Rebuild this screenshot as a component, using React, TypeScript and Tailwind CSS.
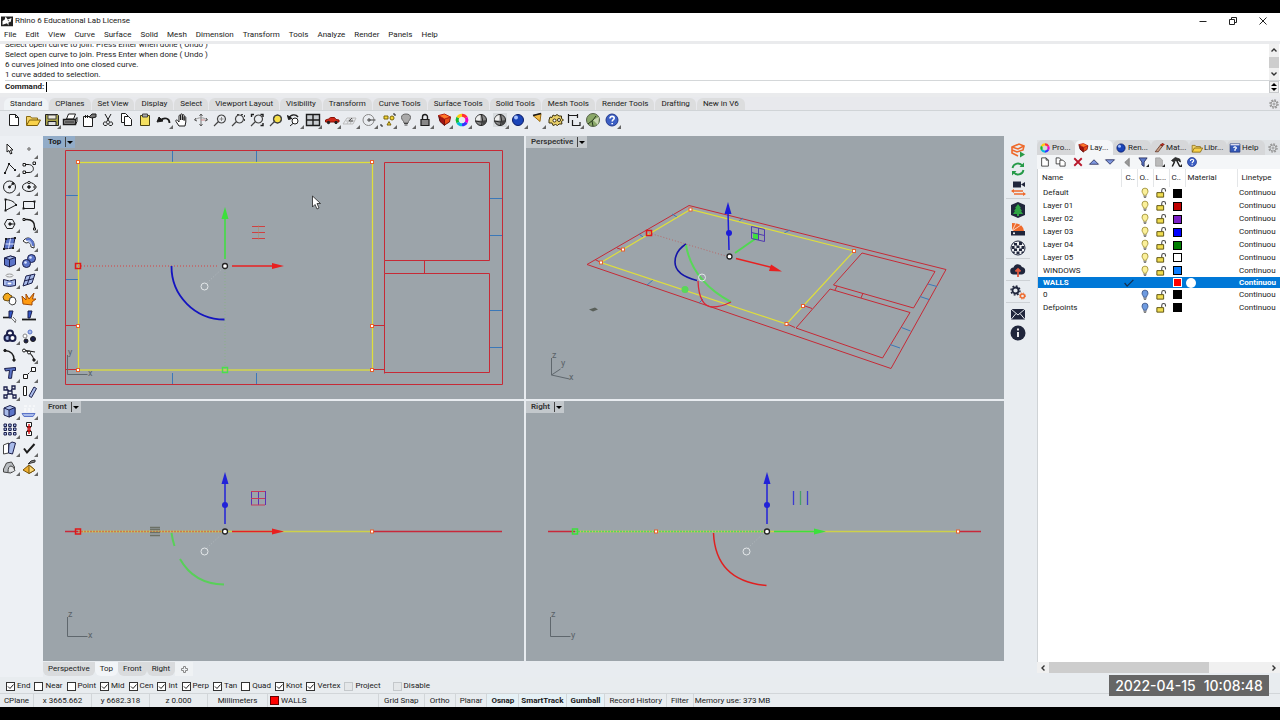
import { useState } from "react";
import type { ReactNode } from "react";
import clsx from "clsx";

interface Tool {
  name: string;
  more?: boolean;
  art: ReactNode;
}

interface Layer {
  name: string;
  on: boolean;
  color: string;
}

const MENUS = [
  "File", "Edit", "View", "Curve", "Surface", "Solid", "Mesh", "Dimension",
  "Transform", "Tools", "Analyze", "Render", "Panels", "Help",
];

const TOOLBAR_TABS = [
  "Standard", "CPlanes", "Set View", "Display", "Select", "Viewport Layout",
  "Visibility", "Transform", "Curve Tools", "Surface Tools", "Solid Tools",
  "Mesh Tools", "Render Tools", "Drafting", "New in V6",
];

const HISTORY = [
  "Select open curve to join. Press Enter when done ( Undo )",
  "Select open curve to join. Press Enter when done ( Undo )",
  "6 curves joined into one closed curve.",
  "1 curve added to selection.",
];

const OSNAPS = [
  { name: "End", on: true },
  { name: "Near", on: false },
  { name: "Point", on: false },
  { name: "Mid", on: true },
  { name: "Cen", on: true },
  { name: "Int", on: true },
  { name: "Perp", on: true },
  { name: "Tan", on: true },
  { name: "Quad", on: false },
  { name: "Knot", on: true },
  { name: "Vertex", on: true },
];

const LAYERS: Layer[] = [
  { name: "Default", on: true, color: "#000000" },
  { name: "Layer 01", on: true, color: "#c00000" },
  { name: "Layer 02", on: true, color: "#7a1fc8" },
  { name: "Layer 03", on: true, color: "#0000ff" },
  { name: "Layer 04", on: true, color: "#007f00" },
  { name: "Layer 05", on: true, color: "#ffffff" },
  { name: "WINDOWS", on: true, color: "#0a7cff" },
  { name: "WALLS", on: true, color: "#ff0000" },
  { name: "0", on: false, color: "#000000" },
  { name: "Defpoints", on: false, color: "#000000" },
];

const K = "#1c1c1c";
const NAVY = "#1b1f4b";
const BLUE = "#5b74c8";
const SKY = "#a9bbea";

function Icon({ children, className = "size-4" }: { children: ReactNode; className?: string }) {
  return (
    <svg
      viewBox="0 0 16 16"
      className={clsx("shrink-0", className)}
      fill="none"
      stroke={K}
      strokeWidth="1"
      aria-hidden="true"
    >
      {children}
    </svg>
  );
}

function ToolButton({ tool }: { tool: Tool }) {
  return (
    <button type="button" aria-label={tool.name} className="relative flex items-center justify-center">
      <Icon>{tool.art}</Icon>
      {tool.more && (
        <svg viewBox="0 0 4 4" className="absolute right-0 bottom-0 size-1" aria-hidden="true">
          <path d="M4 0V4H0Z" fill="#666" />
        </svg>
      )}
    </button>
  );
}

// Shared drawings

const pageArt = <path d="M3.5 2.5h6l3 3v8h-9z M9.5 2.5v3h3" fill="#fff" />;

const folderArt = (
  <>
    <path d="M1.5 13V4.5h4l1 1.5h6v2" fill="#f3d46a" stroke="#8a6a10" />
    <path d="M1.5 13.5l3-5.5h11l-3 5.5z" fill="#f9d24a" stroke="#7a5c08" />
  </>
);

const layersArt = (
  <>
    <path d="M2.500 3.500l6 3.500v6.500L4 9.500z" fill="#a01414" stroke="#5a0c0c" />
    <path d="M8.500 7l6-2-1 5-5 3z" fill="#e84a18" stroke="#7a1008" />
    <path d="M2.500 3.500l6-1.500 6 3-6 2z" fill="#ff7a2a" stroke="#c02010" />
  </>
);

const wheelArt = (
  <g fill="none" strokeWidth="3">
    <path d="M8 3.200a4.800 4.800 0 0 1 4.200 2.400" stroke="#f33" />
    <path d="M12.200 5.600a4.800 4.800 0 0 1 0 4.800" stroke="#e0c" />
    <path d="M12.200 10.400A4.800 4.800 0 0 1 8 12.800" stroke="#33f" />
    <path d="M8 12.800a4.800 4.800 0 0 1-4.200-2.400" stroke="#0bd" />
    <path d="M3.800 10.400a4.800 4.800 0 0 1 0-4.800" stroke="#1b3" />
    <path d="M3.800 5.600A4.800 4.800 0 0 1 8 3.200" stroke="#fc1" />
  </g>
);

const helpArt = (
  <>
    <circle cx="8" cy="8" r="6" fill="#3c5fc4" stroke="#23388c" />
    <path d="M6 6.500c0-3 4.200-2.600 4.200-.3 0 1.500-2 1.500-2 3.300M8.200 11v1.300" stroke="#fff" strokeWidth="1.600" />
  </>
);

const sphereArt = (
  <>
    <circle cx="8" cy="8" r="5.500" fill="#888" stroke="#222" />
    <path d="M7.500 3a5.500 5.500 0 0 0-5 5.500h5z" fill="#eee" stroke="none" />
    <path d="M2.500 9q5.500 2 11 0M8.500 2.500q2 5.500 0 11" stroke="#222" />
    <path d="M9.500 8.500h4a5 5 0 0 1-4 5z" fill="#444" stroke="none" />
  </>
);

const blueSphereArt = (
  <>
    <circle cx="8" cy="8" r="5.500" fill="#1a44b8" stroke="#0a1b66" />
    <circle cx="6" cy="5.500" r="2" fill="#a8c2ff" stroke="none" />
  </>
);

const lensArt = <path d="M9.500 3a4 4 0 1 1-.1 0zM6.500 9.500L2 14" stroke="#444" strokeWidth="1.200" />;

const STANDARD_TOOLS: Tool[] = [
  { name: "New", art: pageArt },
  { name: "Open", art: folderArt },
  {
    name: "Save",
    more: true,
    art: (
      <>
        <path d="M1.500 2.500h12l1 1v10h-13z" fill="#a8a24a" stroke="#222" />
        <path d="M4 3h8v4H4z" fill="#eceade" stroke="#444" />
        <path d="M4 9.500h8v4H4z" fill="#ddd" stroke="#222" />
      </>
    ),
  },
  {
    name: "Print",
    art: (
      <>
        <path d="M4.500 7l2-5h7l-2 5z" fill="#fff" />
        <path d="M1.500 7.500h12v5h-12z" fill="#999" strokeWidth="1.400" />
        <path d="M13.500 7.500l1.500-2v4l-1.500 3M3 10h9" />
      </>
    ),
  },
  {
    name: "Properties",
    art: (
      <>
        <path d="M2.500 4.500h9v10h-9z" fill="#fff" />
        <path d="M8 5l3-3h4v3l-4 1z" fill="#777" />
        <path d="M4.500 3v3M6.500 3v3" />
      </>
    ),
  },
  { name: "Cut", art: <path d="M5 2l4.500 8M11 2L6.500 10M6 10.500a1.500 1.800 0 1 0-1 3 1.800 1.500 0 0 0 1-3zM10 10.500a1.500 1.800 0 1 1 1 3 1.800 1.500 0 0 1-1-3z" /> },
  {
    name: "Copy",
    art: (
      <>
        <path d="M3.500 1.500h4l3 3v6h-7z" fill="#fff" />
        <path d="M6.500 4.500h4l3 3v6h-7z" fill="#fff" />
      </>
    ),
  },
  {
    name: "Paste",
    art: (
      <>
        <path d="M3.500 3.500h9v10h-9z" fill="#f4e060" stroke="#4a4210" />
        <path d="M5.500 2h5v3h-5z" fill="#a8a8a8" stroke="#444" />
      </>
    ),
  },
  {
    name: "Undo",
    more: true,
    art: (
      <>
        <path d="M13.500 11c0-5-5-6-9-3" strokeWidth="1.800" />
        <path d="M1 10l2-5 4 4z" fill={K} />
      </>
    ),
  },
  { name: "Pan", art: <path d="M5 14L2 9.500c-1-1.500 1-2 1.800-.8L5 10V4c0-1.200 1.600-1.200 1.600 0v4-5.200c0-1.200 1.800-1.200 1.800 0V8 3.500c0-1.200 1.700-1.200 1.700 0V8.500 5.500c0-1.200 1.700-1.200 1.700 0v4.500L11 14z" fill="#fff" /> },
  {
    name: "Rotate view",
    art: (
      <>
        <path d="M8 2v12" stroke="#777" />
        <path d="M2 8c3-3 9-3 12 0" stroke="#999" />
        <path d="M6.500 4L8 2l1.500 2M6.500 12L8 14l1.500-2M3 6L1.500 8 4 9M13 6l1.500 2L12 9" stroke="#555" />
        <path d="M8 8h4" stroke="#c88" />
      </>
    ),
  },
  { name: "Zoom dynamic", art: <>{lensArt}<path d="M7.500 7h4M9.500 5v4" stroke="#888" /></> },
  { name: "Zoom window", art: <>{lensArt}<path d="M7 2.500h7.500v8" stroke="#444" strokeDasharray="2 2" /></> },
  { name: "Zoom extents", art: <>{lensArt}<path d="M2.500 5V2.500H5M11.500 2.500H14V5M14 11v2.500h-2.500" strokeWidth="1.400" /></> },
  { name: "Zoom selected", art: <><circle cx="9.500" cy="7" r="4" fill="#f6df48" />{lensArt}</> },
  { name: "Undo view change", more: true, art: <><path d="M3 6c2-4 7-4 9-1" strokeWidth="1.400" /><path d="M1.500 3.500l1 4 3.500-1z" fill={K} /><circle cx="9" cy="9" r="3" fill="#fff" /><path d="M7 11.500L4 14" /></> },
  { name: "Four viewports", more: true, art: <><path d="M1.500 2.500h13v11h-13z" fill="#c8ccd0" strokeWidth="1.400" /><path d="M8 2.500v11M1.500 8h13" strokeWidth="1.400" /></> },
  { name: "Set view", more: true, art: <><path d="M1.500 10V8l3-1 2-1.500h4l1.500 2 3 .5v2z" fill="#d02818" stroke="#8a1208" /><circle cx="4.500" cy="10.500" r="1.200" fill="#222" /><circle cx="12" cy="10.500" r="1.200" fill="#222" /></> },
  { name: "Set CPlane", more: true, art: <><path d="M1 12l4-6h9l-3 6zM4 9h9M8 6l-3 6M11 6l-3 6" stroke="#bbb" /><path d="M7 9l3-3M7 9h4" stroke="#555" /></> },
  { name: "Object snap", more: true, art: <><circle cx="7.500" cy="8" r="5.500" stroke="#888" /><path d="M7.500 8h7" stroke="#444" /><circle cx="8" cy="8" r="1.200" stroke="#444" /></> },
  { name: "Select", more: true, art: <><path d="M4 4h4v3H4z" fill="#f6d838" stroke="#7a6408" /><path d="M7 13l2-3.500 2 3.500z" fill="#f6d838" stroke="#7a6408" /><circle cx="12" cy="6" r="2" fill="#f6d838" stroke="#7a6408" /><path d="M1 12v2h2M13 2h2v2" /></> },
  { name: "Hide", more: true, art: <><path d="M6 11C6 9 3.500 8 3.500 5.500a4.500 3.500 0 0 1 9 0C12.500 8 10 9 10 11z" fill="#aaa" stroke="#666" /><path d="M6 11.500h4M6.500 13h3" stroke="#444" /></> },
  { name: "Lock", more: true, art: <><path d="M5.500 7.500V5a2.500 2.500 0 0 1 5 0v2.500" strokeWidth="1.400" /><path d="M4 7.500h8v6H4z" fill="#888" strokeWidth="1.200" /></> },
  { name: "Edit layers", more: true, art: layersArt },
  { name: "Object properties", more: true, art: wheelArt },
  { name: "Shade", art: sphereArt },
  { name: "Rendered", more: true, art: <><path d="M1 1h14v14H1z" fill="#d6dadd" stroke="none" />{sphereArt}</> },
  { name: "Render", more: true, art: blueSphereArt },
  { name: "Spotlight", more: true, art: <><path d="M4 3.500l8-2-1 8z" fill="#f2bc48" stroke="#9a6a10" /><path d="M4 3.500l8-2" strokeWidth="1.500" /></> },
  { name: "Options", art: <><path d="M1 8l1-3 2 .5L5 3l2 1 2-1.500L11 4l2.500 0L13.500 6.500 15.500 8l-2 1.500.5 2.500-3 0-1.500 1.500-2-1-2.500 1L4 11l-3 0z" fill="#e8cf6a" stroke="#3a3010" /><path d="M5 8.500a1.500 1.500 0 1 0 3 0 1.500 1.500 0 1 0-3 0M9.500 8a1.500 1.500 0 1 0 3 0 1.500 1.500 0 1 0-3 0" fill="#fff" stroke="#3a3010" /></> },
  { name: "Dimension", more: true, art: <path d="M2.500 2v9M2.500 3.500h9M11.500 2v4M6.500 8v5.500h7M14 10v4" strokeWidth="1.200" /> },
  { name: "Grasshopper", art: <><circle cx="8" cy="8" r="6.500" fill="#8aa868" stroke="#55624a" /><path d="M8 8l6-3-1 8z" fill="#c8d6b0" stroke="none" /><path d="M3 12l5-4 3-4M7 9l1 5" stroke="#26381c" /></> },
  { name: "Help", more: true, art: helpArt },
];

const SIDE_TOOLS: Tool[] = [
  { name: "Pointer", art: <path d="M5 3v8l2-1.500 1.500 3.500 1.500-.7L8.500 9H11z" fill="#fff" /> },
  { name: "Point", more: true, art: <circle cx="8" cy="8" r="1.200" fill="#fff" stroke="#555" /> },
  { name: "Polyline", more: true, art: <><path d="M3 13L7 4l6 6" /><path d="M2 12h2v2H2zM6 3h2v2H6zM12 9h2v2h-2z" fill={K} stroke="none" /></> },
  { name: "Curve", more: true, art: <><path d="M3 12.500h5c6 0 6-8-1-8H3" /><path d="M2 3.500h2.500V6H2zM12 2h2.500v2.500H12zM2 11h2.500v2.500H2z" fill="#fff" /></> },
  { name: "Circle", more: true, art: <><circle cx="7.500" cy="8" r="6" /><path d="M7.500 8l3-3" /><circle cx="7.500" cy="8" r="1" fill={K} /><circle cx="11" cy="4.500" r="1" fill={K} /></> },
  { name: "Ellipse", more: true, art: <><ellipse cx="8" cy="8" rx="6.500" ry="4.500" /><circle cx="8" cy="8" r="1.300" fill={K} /><circle cx="8" cy="3.500" r="1.200" fill="#fff" /><circle cx="14" cy="8" r="1.200" fill="#fff" /></> },
  { name: "Arc", more: true, art: <><path d="M3.500 2.500v11L14 8C12 4 8 3 3.500 2.500z" /><path d="M2.500 1.500h2v2h-2zM2.500 12.500h2v2h-2zM13 7h2v2h-2z" fill={K} stroke="none" /></> },
  { name: "Rectangle", more: true, art: <><path d="M2.500 4.500h11v7h-11z" /><path d="M1.500 10.500h2v2h-2zM12.500 3.500h2v2h-2z" fill={K} stroke="none" /></> },
  { name: "Polygon", more: true, art: <><path d="M5 3.500h5.500L13 8l-2.500 4.500H5L2.500 8z" /><path d="M8 8h5" /><circle cx="8" cy="8" r="1.200" fill={K} /></> },
  { name: "Fillet", more: true, art: <><path d="M3 3.500h3c5 0 7.500 3 7.500 7v3" strokeWidth="1.400" /><path d="M2 2.500h2v2H2zM12.500 12h2v2h-2z" fill="#fff" /></> },
  { name: "Surface", more: true, art: <><path d="M4 4l9-1-2 10-9 1z" fill={BLUE} stroke={NAVY} /><path d="M3.500 9h9M8.500 3.500l-2 10" stroke="#dde4ff" /><path d="M3 3h2v2H3zM12 2h2v2h-2zM10 12h2v2h-2zM1 13h2v2H1z" fill={K} stroke="none" /></> },
  { name: "Sweep", more: true, art: <><path d="M2 6q4-5 8-2 4 3 3 9l-3-1q0-6-5-4z" fill="#fff" stroke="#333" /><path d="M5 5q3-2 5 0 3 3 2 6" fill={SKY} stroke={BLUE} strokeWidth="2" /></> },
  { name: "Box", more: true, art: <><path d="M2.500 5l6-2 5 1.500v7l-6 2.500-5-2z" fill={BLUE} stroke={NAVY} /><path d="M2.500 5l5 1.500 6-2-5-1.500z" fill={SKY} stroke={NAVY} /><path d="M7.500 6.500V14" stroke={NAVY} /></> },
  { name: "Boolean", more: true, art: <><circle cx="10.500" cy="5.500" r="4" fill={BLUE} stroke={NAVY} /><circle cx="5.500" cy="10.500" r="4" fill={BLUE} stroke={NAVY} /><circle cx="9.500" cy="4.500" r="1.300" fill="#dde5ff" stroke="none" /><circle cx="4.500" cy="9.500" r="1.300" fill="#dde5ff" stroke="none" /></> },
  { name: "Extract surface", more: true, art: <><ellipse cx="7.500" cy="3.500" rx="3.500" ry="1.500" stroke="#999" /><path d="M1.500 7.500q6 3 12 0v6q-6 2-12 0z" fill={SKY} stroke={NAVY} /><path d="M5 10h5v3H5z" fill="#fff" stroke={BLUE} /></> },
  { name: "Mesh", more: true, art: <><path d="M5 4l9-2-3 9-9 3z" fill={SKY} stroke={NAVY} /><path d="M3 9l10-2.500M9.500 3L6 13" stroke={NAVY} /></> },
  { name: "Join", art: <><path d="M3 3l3-1 2 2 2 1-1 3-3 2-4-1-1-3z" fill="#f3a81c" stroke="#6a4808" /><path d="M8 7l3-1 2 1 1 3-1 3-3 1-3-2z" fill="#fff" stroke="#444" /></> },
  { name: "Explode", art: <path d="M2 13L1 5l4 4V3l3 5 5-6-1.500 6L15 8l-4 3v3z" fill="#ff9a10" stroke="#a04a08" /> },
  { name: "Trim", art: <><path d="M1 8.500h6" strokeWidth="1.600" /><path d="M7 2h4l-2 7H7z" fill="#3458c8" stroke={NAVY} /><path d="M9 9l4 4M11 8l3 3-1 3" stroke="#777" /></> },
  { name: "Split", art: <><path d="M1 10.500h14" strokeWidth="1.800" /><path d="M7 2h4L9 9H7z" fill="#3458c8" stroke={NAVY} /></> },
  { name: "Group", more: true, art: <><circle cx="8" cy="5.500" r="3" stroke={NAVY} strokeWidth="2" fill="#fff" /><circle cx="5.500" cy="10" r="3" stroke={NAVY} strokeWidth="2" fill={SKY} /><circle cx="10.500" cy="10" r="3" stroke={NAVY} strokeWidth="2" fill="#fff" /></> },
  { name: "Ungroup", art: <><circle cx="9" cy="4" r="2" fill={SKY} stroke={BLUE} /><circle cx="4" cy="8" r="2" fill="#fff" stroke="#888" /><circle cx="12" cy="11" r="2.500" fill={NAVY} /><circle cx="5" cy="13" r="2" fill={NAVY} /></> },
  { name: "Points on", art: <><path d="M3 3.500q9 1 9 9" strokeWidth="1.300" /><circle cx="3" cy="3.500" r="1.200" fill={K} /><circle cx="12" cy="13" r="1.200" fill={K} /></> },
  { name: "Edit points", more: true, art: <><path d="M2 3l12 2M2 3q9 2 11 10" strokeWidth="1.200" /><circle cx="3" cy="3.500" r="1.500" fill="#fff" /><circle cx="8" cy="5.500" r="1.500" fill="#fff" /><circle cx="13" cy="13" r="1.200" fill={K} /></> },
  { name: "Text", more: true, art: <path d="M2.500 3.500l11-1v3l-3-.2-1 8h-3l1-8-4 .7z" fill={BLUE} stroke={NAVY} /> },
  { name: "Move", more: true, art: <><path d="M2.500 9.500h4v4h-4zM10.500 2.500h4v4h-4z" fill="#fff" /><path d="M7 9l3-3" strokeDasharray="1.500 1" /></> },
  { name: "Block", more: true, art: <path d="M2 3h3v3H2zM10 2h3v3h-3zM6 7h4v3H6zM2 11h3v3H2zM11 11h3v3h-3zM5 5l2 2M10 5L9 7M5 11l1-1M10 10l1 1" stroke={NAVY} strokeWidth="1.300" /> },
  { name: "Align", art: <><path d="M2.500 2.500h3v9h-3z" fill="#fff" /><path d="M8 12l5-9 2.500 1.500-5 9z" fill={SKY} stroke={NAVY} /></> },
  { name: "Cage", more: true, art: <><path d="M2 5l6-2.500 5 2v7l-6 2.500-5-2z" fill={SKY} stroke={NAVY} /><path d="M7 7l6-2.500v7L7 14z" fill={BLUE} stroke={NAVY} /><path d="M2 5l5 2" stroke={NAVY} /></> },
  { name: "Project", more: true, art: <><path d="M3 3h3M8 3h2M12 3h2M4 5v4M8 5v4M12 5v4" stroke="#fff" /><path d="M1 10.500h13l-2 3H3z" fill={SKY} stroke={BLUE} /></> },
  { name: "Array", more: true, art: <path d="M2 3h2.500v2.500H2zM6.700 3h2.500v2.500H6.700zM11.500 3H14v2.500h-2.500zM2 7h2.500v2.500H2zM6.700 7h2.500v2.500H6.700zM11.500 7H14v2.500h-2.500zM2 11.500h2.500V14H2zM6.700 11.500h2.500V14H6.700zM11.500 11.500H14V14h-2.500z" fill={SKY} stroke={NAVY} /> },
  { name: "Distribute", more: true, art: <><path d="M5.500 1.500h5v4h-5zM5.500 10.500h5v4h-5z" fill="#fff" /><path d="M8 3v10" stroke="#d22" strokeWidth="1.500" /><path d="M6 7l2-2 2 2zM6 9l2 2 2-2z" fill="#d22" stroke="#a11" /></> },
  { name: "Flow", more: true, art: <><path d="M1.500 5l5-2v10l-5 1z" fill="#fff" stroke="#444" /><path d="M7 4l3-2 3.500 1-3 11-4-1z" fill={SKY} stroke={NAVY} /></> },
  { name: "Check", more: true, art: <path d="M3 8.500L6 12.500 13.500 4" strokeWidth="2" /> },
  { name: "Solids", more: true, art: <><path d="M1.500 10l3-6 5-1 3 5v4l-4 2-7-1z" fill="#b8bcc0" stroke="#444" /><path d="M6 13q0-6 3-6t4 5" fill="#e4e6e8" stroke="#444" /></> },
  { name: "Pyramid", more: true, art: <><path d="M2 11l6-5 6 5-6 3.500z" fill="#f0b030" stroke="#7a5408" /><path d="M8 6v8.500l6-3.500z" fill="#f9d878" stroke="#7a5408" /><path d="M7 5l3-3 4-1v2l-4 1z" fill="#888" stroke="#333" /></> },
];

const PANEL_TABS: Tool[] = [
  { name: "Pro...", art: wheelArt },
  { name: "Lay...", art: layersArt },
  { name: "Ren...", art: blueSphereArt },
  { name: "Mat...", art: <><path d="M3 13l7-9 3 1-6 8z" fill="#c8a088" stroke="#5a2a18" /><path d="M10 4l2-2 3 1-2 2z" fill="#d03020" stroke="#701008" /></> },
  { name: "Libr...", art: folderArt },
  { name: "Help", art: <><path d="M1.500 2.500h13v11h-13z" fill="#3458b8" stroke="#22367a" /><path d="M2 3.500h12" stroke="#dde" strokeWidth="2" /><path d="M6 8q2-3 4 0l-2 2v2" stroke="#fff" strokeWidth="1.500" /></> },
];

const PANEL_TOOLS: Tool[] = [
  { name: "New layer", art: pageArt },
  { name: "New sublayer", art: <><path d="M1.500 2.500h4l2.500 2v6H1.500z" fill="#fff" /><path d="M6.500 5.500h4l3 3v5h-7z" fill="#fff" /></> },
  { name: "Delete", art: <path d="M3 3l10 10M13 3L3 13" stroke="#b8182c" strokeWidth="2.400" /> },
  { name: "Move up", art: <path d="M2 11l6-6 6 6z" fill="#7f98e0" stroke={NAVY} /> },
  { name: "Move down", art: <path d="M2 5l6 6 6-6z" fill="#7f98e0" stroke={NAVY} /> },
  { name: "Move up one parent", art: <path d="M11 3v11L5 8.500z" fill="#999" stroke="#777" /> },
  { name: "Filter", more: true, art: <path d="M2.500 2.500h11L9.500 8v6l-3-2V8z" fill="#5c78c8" stroke={NAVY} /> },
  { name: "Match layer", more: true, art: <path d="M3.500 2.500h6l3 3v8h-9z" fill="#bbb" stroke="#999" /> },
  { name: "Tools", more: true, art: <><path d="M2 6l5-4 6 2 1 4-3-2-3 0-3 2z" fill="#333" /><path d="M9 6l4 8M6 8l-3 6" strokeWidth="2" /></> },
  { name: "Help", art: helpArt },
];

const ORANGE = "#ee6a2c";
const INK = "#20263c";

const PLUGIN_GROUPS: Tool[][] = [
  [
    { name: "Start", art: <><path d="M2 5l7-3 5 2-1 4-6 2-5-2zM2 8v3l6 3" stroke={ORANGE} strokeWidth="1.600" /><path d="M2 5l6 2 6-3" stroke={ORANGE} strokeWidth="1.600" /><path d="M10 9.500l5 3-5 3z" fill="#2a9a48" stroke="none" /></> },
    { name: "Synchronize", art: <><path d="M2.500 7a5.500 5.500 0 0 1 10-2M13.500 9a5.500 5.500 0 0 1-10 2" stroke="#259a48" strokeWidth="1.800" /><path d="M14 1.500v4.500H9.500zM2 14.500V10h4.500z" fill="#259a48" stroke="none" /></> },
    { name: "Camera sync", art: <><path d="M3 1.500h8v6H3zM11 4.500l4-2.500v5z" fill={INK} stroke="none" /><path d="M2 11h11M4 14h11" stroke={ORANGE} strokeWidth="1.500" /><path d="M4 9v4l-3-2zM13 12v4l3-2z" fill={ORANGE} stroke="none" /></> },
  ],
  [
    { name: "Library", art: <><path d="M8 0l7 3v10l-7 3-7-3V3z" fill={INK} stroke="none" /><path d="M8 2l3 4h-1l2 3h-1l2 3H9v2H7v-2H3l2-3H4l2-3H5z" fill="#2fa544" stroke="none" /></> },
    { name: "Materials", art: <><path d="M2 2q11 0 12 8H2z" fill={ORANGE} stroke="none" /><path d="M2 10l4-8M2 10l9-6" stroke="#fff" strokeWidth=".7" /><path d="M1 10h14v4.500H1z" fill={INK} stroke="none" /><circle cx="4" cy="12.300" r="1" fill="#fff" stroke="none" /></> },
    { name: "Sphere", art: <><circle cx="8" cy="8" r="7" fill="#eef0f2" stroke={INK} /><path d="M4 3h3v2.500H4zM9 2h3v3H9zM6.500 5.500h3v2.500h-3zM2 6h2.500v3H2zM11.500 6H14v3h-2.500zM4 8.500h3v2.500H4zM9 8.500h3v2.500H9zM6.500 11.500h3V14h-3zM2.800 11.500h2v1.500h-2zM11.500 11.500h2V13h-2z" fill={INK} stroke="none" /></> },
  ],
  [{ name: "Upload", art: <><path d="M4 12.500a3.500 3.500 0 0 1-.5-7A4.500 4.500 0 0 1 12 5a3.800 3.800 0 0 1 0 7.500z" fill={INK} stroke="none" /><path d="M8 15V8M5.500 9.500L8 7l2.500 2.500" stroke="#e35a40" strokeWidth="1.800" /></> }],
  [{ name: "Settings", art: <><circle cx="5.500" cy="6.500" r="3" stroke={INK} strokeWidth="1.800" /><circle cx="5.500" cy="6.500" r="4.500" stroke={INK} strokeWidth="1.400" strokeDasharray="1.800 1.700" /><circle cx="12.500" cy="12" r="2" stroke={ORANGE} strokeWidth="1.300" /><circle cx="12.500" cy="12" r="3" stroke={ORANGE} strokeDasharray="1.200 1.200" /></> }],
  [
    { name: "Feedback", art: <><path d="M1 3h14v10.500H1z" fill={INK} stroke="none" /><path d="M1 3l7 6 7-6M1 13.500l5-6M15 13.500l-5-6" stroke="#e8ecf0" /></> },
    { name: "About", art: <><circle cx="8" cy="8" r="7.500" fill={INK} stroke="none" /><path d="M8 7v5M8 3.500v2" stroke="#fff" strokeWidth="1.800" /></> },
  ],
];

// Handles and manipulators drawn in the viewports

function Handle({ x, y }: { x: number; y: number }) {
  return <rect x={x - 1.5} y={y - 1.5} width="3" height="3" fill="#fff" stroke="#e8602c" />;
}

function Pick({ x, y, color = "#e01818" }: { x: number; y: number; color?: string }) {
  return <rect x={x - 2.5} y={y - 2.5} width="5" height="5" stroke={color} strokeWidth="1.5" />;
}

function Origin({ x, y }: { x: number; y: number }) {
  return <circle cx={x} cy={y} r="2.500" fill="#fff" stroke="#222" strokeWidth="1.300" />;
}

function RightArrow({ x, y, color }: { x: number; y: number; color: string }) {
  return (
    <g>
      <path d={`M${x + 7} ${y}h42`} stroke={color} strokeWidth="1.500" />
      <path d={`M${x + 47} ${y - 3}l12 3-12 3z`} fill={color} />
    </g>
  );
}

function UpArrow({ x, y, color, dot }: { x: number; y: number; color: string; dot?: boolean }) {
  return (
    <g>
      <path d={`M${x} ${y - 7}v-42`} stroke={color} strokeWidth="1.500" />
      <path d={`M${x - 3.5} ${y - 47}l3.500-12 3.500 12z`} fill={color} />
      {dot && <circle cx={x} cy={y - 26} r="3" fill={color} />}
    </g>
  );
}

function Axes({ x, y, up, right }: { x: number; y: number; up: string; right: string }) {
  return (
    <g>
      <path d={`M${x + 0.5} ${y - 20}v19.500h20`} stroke="#5f676d" />
      <text x={x + 1} y={y - 20} className="fill-[#5a6268] text-[9px]">{up}</text>
      <text x={x + 21} y={y + 1} className="fill-[#5a6268] text-[9px]">{right}</text>
    </g>
  );
}

function TopDrawing() {
  return (
    <>
      <g stroke="#c62a36">
        <path d="M22.500 14.500h437v234h-437zM341.500 26.500h105v98h-105zM341.500 137.500h105v99h-105z" />
        <path d="M341.500 124.500v13M381.500 124.500v13M22.500 189.500h13M22.500 233.500h13M329.500 189.500h12v48M329.500 233.500h12" />
      </g>
      <path
        d="M129.500 15v11M213.500 15v11M129.500 237v11M213.500 237v11M23 59.500h12M23 143.500h12M447 62.500h12M447 99.500h12M447 174.500h12M447 211.500h12"
        stroke="#3b78b8"
      />
      <rect x="35.500" y="26.500" width="294" height="207.500" stroke="#dede3c" strokeWidth="1.300" />
      <path d="M35 130h141" stroke="#d84040" strokeDasharray="1 2" />
      <path d="M182 130v104" stroke="#8ab088" strokeDasharray="1 2" />
      <path d="M182 130l-18 17" stroke="#b4babf" strokeDasharray="1 2" />
      <UpArrow x={182} y={130} color="#3ce03c" />
      <RightArrow x={182} y={130} color="#e82020" />
      <path d="M128.500 130a53 53 0 0 0 53 53.500" stroke="#1414c0" strokeWidth="1.800" />
      <path d="M209 90.500h13M209 96.500h13M209 102.500h13" stroke="#d04040" />
      <path d="M215.500 89v15" stroke="#b08a60" strokeOpacity=".5" />
      <circle cx="161.500" cy="150.500" r="3.500" stroke="#e4e8ea" />
      <Origin x={182} y={130} />
      <Handle x={35} y={26} />
      <Handle x={329} y={26} />
      <Handle x={35} y={190} />
      <Handle x={329} y={190} />
      <Handle x={35} y={234} />
      <Handle x={329} y={234} />
      <Pick x={35} y={130} />
      <Pick x={182} y={234} color="#4ae04a" />
      <Axes x={24} y={239} up="y" right="x" />
      <path d="M269.500 60v11l2.500-2.500 2 4.500 2-1-2-4.500h3.500z" fill="#fff" stroke="#222" strokeWidth=".8" />
    </>
  );
}

function PerspectiveDrawing() {
  return (
    <>
      <g stroke="#c62a36">
        <path d="M61 128.500L163 69.500l257 64-55 99z" />
        <path d="M336 117l73 18.500-21.500 36.500-80-23zM304 153l80 23.500L356.500 222 270 192z" />
        <path d="M311 150l-2 4M337 157l-2 5M69 123.500l6 3M91 112l6 2M279 170l7 2.500M261 188l8 3.500" />
      </g>
      <path
        d="M146 78l5 3M113 98l4 3M212 86l5-4M258 97l6-3M121 149l6-5M173 167l4-4M402 148l9 2.500M394 160.500l9 3M375.500 191.500l9 3.500M364 208.500l10 3.500"
        stroke="#3b78b8"
      />
      <path d="M75 126.500l89.500-53L328 115l-67.500 73z" stroke="#dede3c" strokeWidth="1.200" />
      <path d="M123 97l80 24" stroke="#b86868" strokeDasharray="1 2" />
      <path d="M202 76l1 38" stroke="#1c1cd8" strokeWidth="1.500" />
      <path d="M198.500 78l3.500-12 3.500 12z" fill="#1c1cd8" />
      <circle cx="203" cy="97" r="3" fill="#1c1cd8" />
      <path d="M210 122.500l36 9" stroke="#e82020" strokeWidth="1.500" />
      <path d="M245 128.500l11 7-13-.5z" fill="#e82020" />
      <path d="M209 117l20-14" stroke="#50d850" strokeWidth="2" />
      <rect x="227" y="97" width="6" height="7" fill="#3ce03c" />
      <path d="M225.500 90.500l13 3v12l-13-3zM225.500 96.500l13 3M232.500 92v12" stroke="#503ab0" />
      <path d="M160 108q-11 7-11 18 0 13 22 18.500" stroke="#1414a8" strokeWidth="1.600" />
      <path d="M160 109q6 36 45 57" stroke="#58d858" strokeWidth="2" />
      <path d="M172 145q1 26 15 26 8 0 18-5" stroke="#d82838" strokeWidth="1.300" />
      <circle cx="159" cy="153.500" r="3.500" fill="#58d858" />
      <circle cx="176" cy="141.500" r="3.500" stroke="#e4e8ea" />
      <Origin x={203.5} y={120.5} />
      <Pick x={123} y={97} />
      <Handle x={164.5} y={73.5} />
      <Handle x={328} y={115} />
      <Handle x={97} y={113.5} />
      <Handle x={75} y={126.5} />
      <Handle x={277} y={170} />
      <Handle x={260.5} y={188} />
      <path d="M63 173.500l6-2 3 2-5 2z" fill="#5a605a" />
      <path d="M25.500 222v17l18 4M25.500 239l9-6" stroke="#5f676d" />
      <text x="26" y="222" className="fill-[#5a6268] text-[9px]">z</text>
      <text x="35" y="230" className="fill-[#5a6268] text-[9px]">y</text>
      <text x="43" y="244" className="fill-[#5a6268] text-[9px]">x</text>
    </>
  );
}

function FrontDrawing() {
  return (
    <>
      <path d="M22 130.500h13M329 130.500h130" stroke="#c8283a" strokeWidth="1.500" />
      <path d="M35 130.500h294" stroke="#cdd04a" strokeWidth="1.500" />
      <path d="M35 130.500h147" stroke="#d07848" strokeWidth="1.500" strokeDasharray="2 1" />
      <path d="M107 126.500h10M107 128.500h10M107 131.500h10M107 134.500h10" stroke="#6b7066" strokeWidth="1.500" />
      <path d="M128.500 132q1 7 3 13M137 158q14 25 44 25.500" stroke="#58d058" strokeWidth="2" />
      <path d="M182 130l-18 17" stroke="#b4babf" strokeDasharray="1 2" />
      <UpArrow x={182} y={130} color="#2222d8" dot />
      <RightArrow x={182} y={130.5} color="#e82020" />
      <path d="M208.500 90v14M215.500 90v14M222.500 90v14" stroke="#5a30b8" />
      <path d="M208 90.500h14M208 97.500h14M208 104h14" stroke="#c83858" />
      <circle cx="161.500" cy="150.500" r="3.500" stroke="#e4e8ea" />
      <Origin x={182} y={130.5} />
      <Handle x={329} y={130.5} />
      <Pick x={35} y={130.5} />
      <Axes x={24} y={236} up="z" right="x" />
    </>
  );
}

function RightDrawing() {
  return (
    <>
      <path d="M22 130.500h27M432 130.500h23" stroke="#c8283a" strokeWidth="1.500" />
      <path d="M49 130.500h383" stroke="#cdd04a" strokeWidth="1.500" />
      <path d="M49 130.500h192" stroke="#58d858" strokeWidth="1.500" strokeDasharray="2 1" />
      <path d="M187.500 132q2 48 53 52.500" stroke="#e02020" strokeWidth="1.500" />
      <path d="M240 130l-18 17" stroke="#b4babf" strokeDasharray="1 2" />
      <UpArrow x={241} y={130} color="#2222d8" dot />
      <RightArrow x={241} y={130.5} color="#3ce03c" />
      <path d="M267.500 90v14M281.500 90v14" stroke="#3a3ad0" strokeWidth="1.300" />
      <path d="M274.500 90v14" stroke="#48a068" strokeWidth="1.300" />
      <circle cx="220.500" cy="150.500" r="3.500" stroke="#e4e8ea" />
      <Origin x={241} y={130.5} />
      <Handle x={130} y={130.5} />
      <Handle x={432} y={130.5} />
      <Pick x={49} y={130.5} color="#3ce03c" />
      <Axes x={24} y={236} up="z" right="y" />
    </>
  );
}

const VIEWPORTS = [
  { name: "Top", box: "0 0 481 263", drawing: <TopDrawing /> },
  { name: "Perspective", box: "0 0 478 263", drawing: <PerspectiveDrawing /> },
  { name: "Front", box: "0 0 481 260", drawing: <FrontDrawing /> },
  { name: "Right", box: "0 0 478 260", drawing: <RightDrawing /> },
];

function Chevron({ up }: { up?: boolean }) {
  return (
    <svg viewBox="0 0 6 4" className="h-1 w-1.5" fill="none" stroke="#333" strokeWidth="1.400" aria-hidden="true">
      <path d={up ? "M.5 3.500L3 1l2.500 2.500" : "M.5.500L3 3 5.500.500"} />
    </svg>
  );
}

function Gear({ className }: { className?: string }) {
  return (
    <svg viewBox="0 0 10 10" className={clsx("size-2.5", className)} fill="none" stroke="#999" aria-hidden="true">
      <circle cx="5" cy="5" r="4" strokeDasharray="1.800 1.300" strokeWidth="1.500" />
      <circle cx="5" cy="5" r="3" />
      <circle cx="5" cy="5" r="1" />
    </svg>
  );
}

function SnapBox({ name, initial, dim }: { name: string; initial?: boolean; dim?: boolean }) {
  const [on, setOn] = useState(!!initial);

  return (
    <label className="flex items-center gap-0.5">
      <span className="relative flex">
        <input
          type="checkbox"
          checked={on}
          onChange={() => setOn(!on)}
          className={clsx("size-[9px] appearance-none border", dim ? "border-[#c4c8cb] bg-[#e4e7e9]" : "border-[#333] bg-white")}
        />
        {on && (
          <svg viewBox="0 0 9 9" className="pointer-events-none absolute inset-0 size-[9px]" fill="none" stroke="#222" aria-hidden="true">
            <path d="M2 4.500l2 2L7.500 2.500" />
          </svg>
        )}
      </span>
      {name}
    </label>
  );
}

function Bulb({ on }: { on: boolean }) {
  return (
    <Icon className="mx-auto size-3">
      <path
        d="M6 11C6 9 4 8 4 5.500a4 4 0 0 1 8 0C12 8 10 9 10 11z"
        fill={on ? "#fbf09a" : "#6f9be0"}
        stroke={on ? "#8f8020" : "#2c4478"}
      />
      <path d="M6 12.500h4M6.500 14h3" stroke="#555" />
    </Icon>
  );
}

function OpenLock() {
  return (
    <Icon className="mx-auto size-3">
      <path d="M9 7V4.500a2.500 2.500 0 0 1 5 0V6" stroke="#444" strokeWidth="1.400" />
      <path d="M2.500 7.500h9v6h-9z" fill="#f0dc50" stroke="#5e5210" strokeWidth="1.300" />
    </Icon>
  );
}

function LayersPanel() {
  const [current, setCurrent] = useState("WALLS");

  return (
    <section className="mt-1 mb-1 flex w-[243px] flex-col overflow-hidden">
      <div className="flex h-[15px] items-stretch bg-[#dfe2e5]">
        {PANEL_TABS.map((tab) => (
          <button
            key={tab.name}
            type="button"
            className={clsx(
              "flex w-[38px] shrink-0 items-center gap-px rounded-t-md pl-0.5 whitespace-nowrap",
              tab.name === "Lay..." ? "bg-[#f4f6f8]" : "bg-[#d6d7d9]"
            )}
          >
            <Icon className="size-3">{tab.art}</Icon>
            {tab.name}
          </button>
        ))}
        <Gear className="m-auto" />
      </div>

      <div className="flex h-3.5 items-center bg-[#f4f6f8]">
        <div className="grid h-3.5 w-[163px] grid-cols-10">
          {PANEL_TOOLS.map((tool) => (
            <button key={tool.name} type="button" aria-label={tool.name} className="relative flex items-center justify-center">
              <Icon className="size-3">{tool.art}</Icon>
              {tool.more && (
                <svg viewBox="0 0 4 4" className="absolute right-0.5 bottom-0.5 size-[3px]" aria-hidden="true">
                  <path d="M4 0V4H0Z" fill="#222" />
                </svg>
              )}
            </button>
          ))}
        </div>
      </div>

      <div className="flex-1 overflow-hidden border-l border-[#cfd3d6] bg-white">
        <table className="h-[145px] w-full table-fixed border-collapse leading-[10px]">
          <colgroup>
            <col className="w-[83px]" />
            <col className="w-4" />
            <col className="w-4" />
            <col className="w-4" />
            <col className="w-4" />
            <col className="w-[52px]" />
            <col />
          </colgroup>
          <thead>
            <tr className="h-[18px] text-left">
              <th className="pl-1 font-normal">Name</th>
              <th className="border-l border-[#e4e6e8] pl-1 font-normal">C..</th>
              <th className="border-l border-[#e4e6e8] pl-0.5 font-normal">O..</th>
              <th className="border-l border-[#e4e6e8] pl-0.5 font-normal">L...</th>
              <th className="border-l border-[#e4e6e8] pl-0.5 font-normal">C..</th>
              <th className="border-l border-[#e4e6e8] pl-0.5 font-normal">Material</th>
              <th className="border-l border-[#e4e6e8] pl-1 font-normal">Linetype</th>
            </tr>
          </thead>
          <tbody>
            {LAYERS.map((layer) => {
              const active = layer.name === current;
              return (
                <tr
                  key={layer.name}
                  onClick={() => setCurrent(layer.name)}
                  className={clsx(active && "bg-[#0078d7] font-bold text-white")}
                >
                  <td className="pl-[5px]">{layer.name}</td>
                  <td>
                    {active && (
                      <Icon className="mx-auto size-2.5">
                        <path d="M1 8l4 5L15 3" stroke="#16304e" strokeWidth="2" />
                      </Icon>
                    )}
                  </td>
                  <td>{!active && <Bulb on={layer.on} />}</td>
                  <td>{!active && <OpenLock />}</td>
                  <td>
                    <div
                      className={clsx("mx-auto size-[9px] border", active ? "border-white" : "border-black")}
                      style={{ backgroundColor: layer.color }}
                    />
                  </td>
                  <td>{active && <div className="ml-px size-2.5 rounded-full bg-white" />}</td>
                  <td className="overflow-hidden pl-0.5 whitespace-nowrap">Continuou</td>
                </tr>
              );
            })}
          </tbody>
        </table>
      </div>

      <div className="flex h-[11px] items-center bg-[#f0f0f0]">
        <span className="flex w-3 rotate-90 justify-center"><Chevron /></span>
        <div className="flex h-full flex-1">
          <div className="w-[73%] bg-[#cdcdcd]" />
        </div>
        <span className="flex w-3 -rotate-90 justify-center"><Chevron /></span>
      </div>
    </section>
  );
}

export default function App() {
  const [view, setView] = useState("Top");
  const [command, setCommand] = useState("");

  return (
    <div className="relative flex h-screen min-h-[720px] flex-col overflow-hidden bg-black py-[13px] font-['Roboto','Open_Sans',sans-serif] text-[8px] leading-[10px] text-[#1a1a1a]">
      <header className="bg-white">
        <div className="flex h-[15px] items-center pl-px">
          <Icon className="size-3">
            <path d="M0 2h16v13H0z" fill="#222" stroke="none" />
            <path d="M2 13V8l3-2 1-4 3 4 5-2-1 5-3 1v4l-2-3z" fill="#fff" stroke="none" />
            <path d="M9 7l2 1" stroke="#222" />
          </Icon>
          <h1 className="ml-0.5 flex-1">Rhino 6 Educational Lab License</h1>
          <div className="flex items-center pr-0.5">
            <button type="button" aria-label="Minimize" className="flex w-[30px] justify-center">
              <svg viewBox="0 0 8 8" className="size-2" stroke="#222"><path d="M.5 4.500h7" /></svg>
            </button>
            <button type="button" aria-label="Restore" className="flex w-[30px] justify-center">
              <svg viewBox="0 0 8 8" className="size-2" fill="none" stroke="#222"><path d="M.5 2.500h5v5h-5zM2.500 2.500v-2h5v5h-2" /></svg>
            </button>
            <button type="button" aria-label="Close" className="flex w-[30px] justify-center">
              <svg viewBox="0 0 8 8" className="size-2" stroke="#222"><path d="M.5.500l7 7M7.500.500l-7 7" /></svg>
            </button>
          </div>
        </div>
        <nav className="flex h-[13px] items-center gap-[9px] pl-1">
          {MENUS.map((menu) => (
            <button key={menu} type="button">{menu}</button>
          ))}
        </nav>
      </header>

      <section className="border-t-3 border-b-4 border-[#eaebed] bg-white pl-[5px]">
        <div className="flex h-[37px] border-b border-[#d4d7d9]">
          <div className="flex flex-1 flex-col justify-end overflow-hidden">
            {HISTORY.map((line, i) => (
              <p key={i} className="shrink-0">{line}</p>
            ))}
          </div>
          <div className="mr-px flex w-2.5 flex-col items-center justify-between bg-[#f0f0f0] py-1">
            <Chevron up />
            <div className="h-[11px] w-full bg-[#cdcdcd]" />
            <Chevron />
          </div>
        </div>
        <div className="flex h-3 items-center">
          <label htmlFor="command" className="font-bold">Command:</label>
          <input
            id="command"
            value={command}
            autoFocus
            onChange={(e) => setCommand(e.target.value)}
            className="ml-0.5 h-2.5 flex-1 border-l border-black pl-px caret-transparent outline-none"
          />
          <div className="mr-px flex h-full w-2.5 flex-col items-center justify-evenly border border-[#c8cacc] bg-[#f0f0f0]">
            <svg viewBox="0 0 6 3" className="h-[3px] w-1.5"><path d="M0 3l3-3 3 3z" /></svg>
            <svg viewBox="0 0 6 3" className="h-[3px] w-1.5"><path d="M0 0l3 3 3-3z" /></svg>
          </div>
        </div>
      </section>

      <div className="flex h-3.5 items-end gap-px border-b border-[#d0d4d7] bg-[#e8e9ed] pl-1">
        {TOOLBAR_TABS.map((tab) => (
          <button
            key={tab}
            type="button"
            className={clsx(
              "h-3 rounded-t-md px-1.5",
              tab === "Standard" ? "bg-[#f0f3f6]" : "bg-[#dcddde]"
            )}
          >
            {tab}
          </button>
        ))}
        <Gear className="mr-px ml-auto self-center" />
      </div>

      <div className="h-[25px] bg-[#e9ecf0] pl-[5px]">
        <div className="grid h-[18px] w-[616px] grid-cols-[repeat(33,minmax(0,1fr))]">
          {STANDARD_TOOLS.map((tool) => (
            <ToolButton key={tool.name} tool={tool} />
          ))}
        </div>
      </div>

      <main className="flex min-h-0 flex-1 bg-[#e8ecf0]">
        <aside className="w-[43px] shrink-0 bg-[#edf0f4] pt-1">
          <div className="grid h-[336px] w-[38px] grid-cols-2 grid-rows-[repeat(18,minmax(0,1fr))] pl-px">
            {SIDE_TOOLS.map((tool) => (
              <ToolButton key={tool.name} tool={tool} />
            ))}
          </div>
        </aside>

        <div className="flex min-w-0 flex-1 flex-col">
          <div className="grid min-h-0 flex-1 grid-cols-[481fr_478fr] grid-rows-[263fr_260fr] gap-0.5">
            {VIEWPORTS.map((vp) => (
              <section key={vp.name} className="relative min-h-0 overflow-hidden bg-[#9ca4aa]">
                <svg viewBox={vp.box} className="block h-full w-full" fill="none" aria-label={`${vp.name} viewport`}>
                  {vp.drawing}
                </svg>
                <button
                  type="button"
                  onClick={() => setView(vp.name)}
                  className={clsx(
                    "absolute top-0 left-0 flex h-3 items-center gap-1 pr-0.5 pl-[5px]",
                    vp.name === view ? "bg-[#92acc8] font-bold" : "bg-[#c3c8cc] font-semibold text-[#333]"
                  )}
                >
                  {vp.name}
                  <span className="flex h-2.5 items-center border-l border-[#444] pl-px">
                    <svg viewBox="0 0 6 3" className="h-[3px] w-1.5"><path d="M0 0l3 3 3-3z" /></svg>
                  </span>
                </button>
              </section>
            ))}
          </div>
          <nav className="flex h-4 items-start pt-px">
            {["Perspective", "Top", "Front", "Right"].map((name) => (
              <button
                key={name}
                type="button"
                onClick={() => setView(name)}
                className={clsx("h-3.5 rounded-b-md px-[5px]", name === view ? "bg-[#f2f5f8]" : "bg-[#d9dbdd]")}
              >
                {name}
              </button>
            ))}
            <button type="button" aria-label="New viewport" className="flex h-3.5 w-[18px] items-center justify-center bg-[#eff2f4]">
              <svg viewBox="0 0 7 7" className="size-[7px]" fill="none" stroke="#888"><path d="M2.500.500h2v2h2v2h-2v2h-2v-2h-2v-2h2z" /></svg>
            </button>
          </nav>
        </div>

        <aside className="flex w-[33px] shrink-0 flex-col items-center pt-[3px] pr-1.5">
          {PLUGIN_GROUPS.map((group, i) => (
            <div key={i} className={clsx("flex flex-col gap-[3px] px-1 pt-[3px] pb-0.5", i > 0 && "border-t border-[#cdd1d5]")}>
              {group.map((tool) => (
                <button key={tool.name} type="button" aria-label={tool.name}>
                  <Icon>{tool.art}</Icon>
                </button>
              ))}
            </div>
          ))}
        </aside>

        <LayersPanel />
      </main>

      <footer className="bg-[#e8ecef]">
        <div className="flex h-4 items-center gap-1 pt-0.5 pl-1.5">
          {OSNAPS.map((snap) => (
            <SnapBox key={snap.name} name={snap.name} initial={snap.on} />
          ))}
          <SnapBox name="Project" dim />
          <span className="w-1" />
          <SnapBox name="Disable" dim />
        </div>
        <div className="flex h-3.5 items-stretch border-t border-[#d2d6d9] text-center leading-[13px] whitespace-nowrap">
          <span className="w-[34px] border-r border-[#d2d6d9]">CPlane</span>
          <span className="w-[58px] border-r border-[#d2d6d9]">x 3665.662</span>
          <span className="w-[58px] border-r border-[#d2d6d9]">y 6682.318</span>
          <span className="w-[58px] border-r border-[#d2d6d9]">z 0.000</span>
          <span className="w-[60px] border-r border-[#d2d6d9]">Millimeters</span>
          <span className="flex w-[111px] items-center gap-0.5 border-r border-[#d2d6d9] pl-0.5">
            <i className="size-[9px] border border-[#600] bg-[#ff0000]" />
            WALLS
          </span>
          <button type="button" className="border-r border-[#d2d6d9] px-[5px]">Grid Snap</button>
          <button type="button" className="border-r border-[#d2d6d9] px-[5px]">Ortho</button>
          <button type="button" className="border-r border-[#d2d6d9] px-1">Planar</button>
          <button type="button" className="border-r border-[#d2d6d9] bg-[#e6f1f6] px-1 font-bold">Osnap</button>
          <button type="button" className="border-r border-[#d2d6d9] bg-[#e6f1f6] px-0.5 font-bold">SmartTrack</button>
          <button type="button" className="border-r border-[#d2d6d9] bg-[#e6f1f6] px-1 font-bold">Gumball</button>
          <button type="button" className="border-r border-[#d2d6d9] px-1">Record History</button>
          <button type="button" className="border-r border-[#d2d6d9] px-1">Filter</button>
          <span className="pl-px">Memory use: 373 MB</span>
        </div>
      </footer>

      <time className="absolute right-[11px] bottom-6 flex h-[21px] w-40 items-center justify-center gap-2 bg-[#666] font-['Inter','Roboto',sans-serif] text-[14px] font-medium text-white">
        <span>2022-04-15</span>
        <span>10:08:48</span>
      </time>
    </div>
  );
}
